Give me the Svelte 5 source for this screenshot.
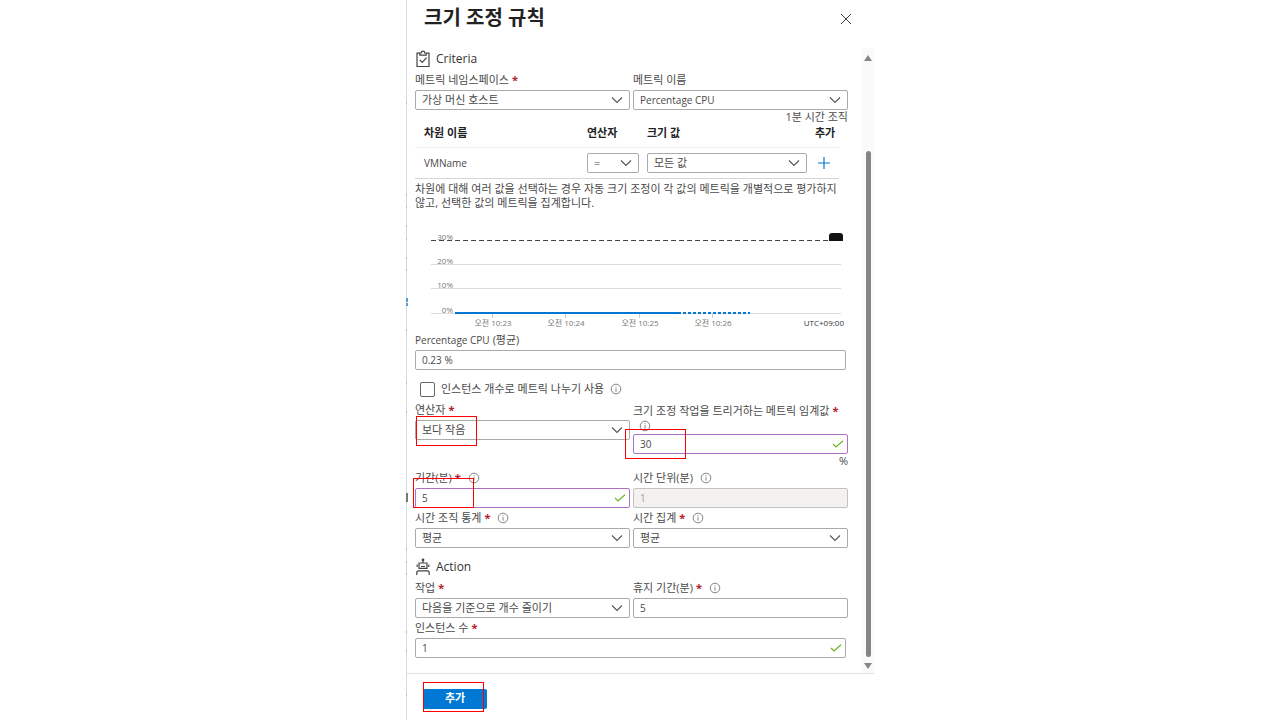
<script>
  const gridLines = [
    { label: '20%', y: 55 },
    { label: '10%', y: 79 },
    { label: '0%', y: 104 }
  ];
  const ticks = [
    { label: '오전 10:23', x: 78 },
    { label: '오전 10:24', x: 151 },
    { label: '오전 10:25', x: 225 },
    { label: '오전 10:26', x: 298 }
  ];
</script>

{#snippet chevron()}
  <svg class="glyph" width="12" height="8" viewBox="0 0 12 8" aria-hidden="true">
    <path d="M1 1.5 6 6.5 11 1.5" fill="none" stroke="#555" stroke-width="1.1" />
  </svg>
{/snippet}

{#snippet check()}
  <svg class="glyph" width="12" height="8" viewBox="0 0 12 8" aria-hidden="true">
    <path d="M1 4 4 7 11 .8" fill="none" stroke="#68b325" stroke-width="1.2" />
  </svg>
{/snippet}

{#snippet info()}
  <svg class="info" width="12" height="12" viewBox="0 0 12 12" aria-hidden="true">
    <circle cx="6" cy="6" r="4.8" fill="none" stroke="#777" stroke-width=".9" />
    <path d="M6 5.2V8.7M6 3.2V4.2" stroke="#777" stroke-width=".9" />
  </svg>
{/snippet}

{#snippet star()}<span class="star">*</span>{/snippet}

<main class="panel">
  <svg class="edge" width="2" height="720" viewBox="0 0 2 720" aria-hidden="true">
    <path d="M0 103h1M0 195h1M0 207h1M0 226h1M0 239h1M0 258h1M0 270h1M0 330h1M0 383h1M0 412h1M0 549h1M0 562h1M0 574h1M0 632h1M0 651h1M0 695h1" stroke="#999" />
    <path d="M1 298v4M1 303v3" stroke="#5b9bd0" stroke-width="2" />
    <path d="M1 493v9" stroke="#777" stroke-width="2" />
  </svg>

  <header>
    <h1>크기 조정 규칙</h1>
    <button class="close" aria-label="닫기">
      <svg width="12" height="12" viewBox="0 0 12 12"><path d="M1 1 11 11M11 1 1 11" stroke="#444" stroke-width="1" /></svg>
    </button>
  </header>

  <div class="scroller">
    <form class="content" id="rule">
      <h2>
        <svg width="16" height="18" viewBox="0 0 16 18" fill="none" stroke="#444" stroke-width="1.2" aria-hidden="true">
          <path d="M4.5 3.2H2V16.5H14V3.2H11.5" />
          <path d="M4.8 5.2V3H6.2C6.3 .6 9.7 .6 9.8 3H11.2V5.2Z" />
          <path d="M4.7 9.8 7.2 12.4 11.6 7.6" />
        </svg>
        Criteria
      </h2>

      <div class="pair">
        <div>
          <label for="ns">메트릭 네임스페이스 {@render star()}</label>
          <div class="field"><select id="ns"><option>가상 머신 호스트</option></select>{@render chevron()}</div>
        </div>
        <div>
          <label for="metric">메트릭 이름</label>
          <div class="field"><select id="metric" class="latin"><option>Percentage CPU</option></select>{@render chevron()}</div>
        </div>
      </div>
      <p class="note">1분 시간 조직</p>

      <table>
        <thead>
          <tr><th class="name">차원 이름</th><th class="op">연산자</th><th class="value">크기 값</th><th class="add">추가</th></tr>
        </thead>
        <tbody>
          <tr>
            <td class="name latin">VMName</td>
            <td class="op"><div class="field"><select aria-label="연산자"><option>=</option></select>{@render chevron()}</div></td>
            <td class="value"><div class="field"><select aria-label="크기 값"><option>모든 값</option></select>{@render chevron()}</div></td>
            <td class="add">
              <button type="button" class="plus" aria-label="추가">
                <svg width="12" height="12" viewBox="0 0 12 12"><path d="M6 0V12M0 6H12" stroke="#0078d4" stroke-width="1.2" /></svg>
              </button>
            </td>
          </tr>
        </tbody>
      </table>

      <p class="help">차원에 대해 여러 값을 선택하는 경우 자동 크기 조정이 각 값의 메트릭을 개별적으로 평가하지 않고, 선택한 값의 메트릭을 집계합니다.</p>

      <svg class="chart" viewBox="0 0 433 120" role="img" aria-label="Percentage CPU">
        {#each gridLines as g}
          <path d="M16 {g.y - 0.5}H426" stroke="#dcdcdc" />
          <text x="38" y={g.y - 1} text-anchor="end">{g.label}</text>
        {/each}
        <text x="38" y="30" text-anchor="end">30%</text>
        <path d="M16 30.5H428" stroke="#444" stroke-dasharray="5 3" />
        <path d="M414 31V26Q414 23 417 23H425Q428 23 428 26V31Z" fill="#111" />
        {#each ticks as t}
          <path d="M{t.x - 0.5} 104V108" stroke="#ccc" />
          <text x={t.x} y="116" text-anchor="middle">{t.label}</text>
        {/each}
        <path d="M40 103H263" stroke="#0078d4" stroke-width="2" />
        <path d="M263 103H335" stroke="#0078d4" stroke-width="2" stroke-dasharray="3 2" />
        <text class="zone" x="429" y="116" text-anchor="end">UTC+09:00</text>
      </svg>

      <div class="single">
        <label for="cpu"><span class="latin">Percentage CPU</span> (평균)</label>
        <div class="field"><input id="cpu" class="latin" value="0.23 %" /></div>
      </div>

      <div class="tick">
        <input type="checkbox" id="divide" />
        <label for="divide">인스턴스 개수로 메트릭 나누기 사용</label>
        {@render info()}
      </div>

      <div class="pair">
        <div>
          <label for="operator">연산자 {@render star()}</label>
          <div class="field">
            <select id="operator"><option>보다 작음</option></select>{@render chevron()}
            <span class="mark mark-operator"></span>
          </div>
        </div>
        <div>
          <label class="tall" for="threshold">크기 조정 작업을 트리거하는 메트릭 임계값 {@render star()}<span class="below">{@render info()}</span></label>
          <div class="field">
            <input id="threshold" class="latin edited" value="30" />{@render check()}
            <span class="mark mark-threshold"></span>
          </div>
        </div>
      </div>
      <p class="note">%</p>

      <div class="pair">
        <div>
          <label for="duration">기간(분) {@render star()} {@render info()}</label>
          <div class="field">
            <input id="duration" class="latin edited" value="5" />{@render check()}
            <span class="mark mark-duration"></span>
          </div>
        </div>
        <div>
          <label for="grain">시간 단위(분) {@render info()}</label>
          <div class="field"><input id="grain" class="latin" value="1" disabled /></div>
        </div>
        <div>
          <label for="stat">시간 조직 통계 {@render star()} {@render info()}</label>
          <div class="field"><select id="stat"><option>평균</option></select>{@render chevron()}</div>
        </div>
        <div>
          <label for="aggregation">시간 집계 {@render star()} {@render info()}</label>
          <div class="field"><select id="aggregation"><option>평균</option></select>{@render chevron()}</div>
        </div>
      </div>

      <h2 class="action">
        <svg width="16" height="18" viewBox="0 0 16 18" fill="none" stroke="#444" stroke-width="1.2" aria-hidden="true">
          <circle cx="8" cy="2" r=".8" fill="#444" />
          <path d="M8 3V5M4 5H12V10.4H4ZM2.2 6.4V9M13.8 6.4V9M6 8.5H10" />
          <path d="M1.8 17V14.5Q1.8 12.8 3.8 12.8H12.2Q14.2 12.8 14.2 14.5V17" />
        </svg>
        Action
      </h2>

      <div class="pair">
        <div>
          <label for="job">작업 {@render star()}</label>
          <div class="field"><select id="job"><option>다음을 기준으로 개수 줄이기</option></select>{@render chevron()}</div>
        </div>
        <div>
          <label for="cool">휴지 기간(분) {@render star()} {@render info()}</label>
          <div class="field"><input id="cool" class="latin" value="5" /></div>
        </div>
      </div>
      <div class="single">
        <label for="count">인스턴스 수 {@render star()}</label>
        <div class="field"><input id="count" class="latin" value="1" />{@render check()}</div>
      </div>
    </form>

    <div class="bar" aria-hidden="true">
      <svg width="8" height="14" viewBox="0 0 8 14"><path d="M4 4 8 10H0Z" fill="#858585" /></svg>
      <span class="space"></span>
      <span class="thumb"></span>
      <svg width="8" height="14" viewBox="0 0 8 14"><path d="M0 4H8L4 10Z" fill="#858585" /></svg>
    </div>
  </div>

  <footer>
    <div class="submit">
      <button form="rule">추가</button>
      <span class="mark mark-submit"></span>
    </div>
  </footer>
</main>

<style>
  :global(body) {
    margin: 0;
    background: #fff;
  }
  .panel,
  .panel * {
    box-sizing: border-box;
  }
  .panel {
    position: relative;
    display: flex;
    flex-direction: column;
    width: 100%;
    max-width: 468px;
    min-height: 100vh;
    margin: 0 auto;
    border-left: 1px solid #ddd;
    color: #4a4a4a;
    font: 11px/14px "Open Sans", "Noto Sans CJK KR", sans-serif;
  }
  .panel .latin {
    font-size: 10px;
  }
  .edge {
    position: absolute;
    left: -1px;
    top: 0;
  }
  header {
    display: flex;
    align-items: flex-start;
    justify-content: space-between;
    height: 48px;
    padding: 4px 20px 0 17px;
  }
  h1 {
    margin: 0;
    color: #222;
    font-size: 20px;
    line-height: 28px;
    font-weight: 600;
  }
  button {
    border: 0;
    padding: 0;
    background: none;
    font: inherit;
  }
  .close {
    display: grid;
    place-items: center;
    width: 16px;
    height: 30px;
  }
  .scroller {
    display: flex;
    flex: 1;
  }
  .content {
    flex: 1;
    min-width: 0;
    padding: 0 14px 15px 8px;
  }
  h2 {
    display: flex;
    align-items: center;
    gap: 5px;
    height: 22px;
    margin: 0;
    color: #333;
    font-size: 12px;
    font-weight: 400;
    line-height: 22px;
  }
  .action {
    margin-top: 8px;
  }
  .pair {
    display: grid;
    grid-template-columns: 1fr 1fr;
    column-gap: 3px;
    align-items: start;
  }
  label {
    display: flex;
    align-items: center;
    gap: 3px;
    height: 20px;
    white-space: nowrap;
  }
  .tall {
    flex-wrap: wrap;
    align-content: flex-start;
    row-gap: 0;
    height: 34px;
    padding-top: 4px;
  }
  .below {
    display: flex;
    align-items: center;
    width: 100%;
    height: 16px;
    padding-left: 6px;
  }
  .star {
    color: #b3202a;
    font-weight: 700;
  }
  .info {
    flex: none;
    margin-left: 4px;
  }
  .below .info {
    margin-left: 0;
  }
  .field {
    position: relative;
    display: grid;
    align-items: center;
  }
  .field > select,
  .field > input,
  .glyph {
    grid-area: 1 / 1;
  }
  .glyph {
    justify-self: end;
    margin-right: 7px;
    pointer-events: none;
  }
  .field > input + .glyph {
    margin-right: 4px;
  }
  select,
  .field > input {
    appearance: none;
    width: 100%;
    min-width: 0;
    height: 20px;
    margin: 0;
    padding: 0 6px 1px;
    border: 1px solid #aaa;
    border-radius: 2px;
    background: #fff;
    color: #4a4a4a;
    font: inherit;
  }
  .field > input.edited {
    border-color: #b070c4;
  }
  .field > input:disabled {
    border-color: #c4c2c0;
    background: #f3f2f1;
    color: #a19f9d;
  }
  .note,
  .help {
    margin: 0;
  }
  .note {
    text-align: right;
  }
  .help {
    margin-top: 3px;
    word-break: keep-all;
  }
  table {
    width: calc(100% - 9px);
    table-layout: fixed;
    border-collapse: separate;
    border-spacing: 0;
  }
  th,
  td {
    padding: 0;
    text-align: left;
    white-space: nowrap;
  }
  th {
    height: 24px;
    padding-bottom: 5px;
    border-bottom: 1px solid #eee;
    color: #222;
    font-weight: 700;
  }
  td {
    height: 31px;
    border-bottom: 1px solid #d6d6d6;
  }
  .name {
    padding-left: 9px;
  }
  .op {
    width: 60px;
    padding-right: 8px;
  }
  .value {
    width: 168px;
    padding-right: 8px;
  }
  .add {
    width: 24px;
  }
  .plus {
    display: grid;
    place-items: center;
    width: 18px;
    height: 20px;
  }
  .chart {
    display: block;
    width: 100%;
  }
  .chart text {
    fill: #777;
    font-size: 8px;
  }
  .chart .zone {
    fill: #333;
  }
  .single {
    padding-right: 2px;
  }
  .tick {
    display: flex;
    align-items: center;
    gap: 6px;
    height: 22px;
    margin-top: 8px;
    padding-left: 5px;
  }
  .tick input {
    appearance: none;
    width: 15px;
    height: 15px;
    margin: 0;
    border: 1px solid #666;
    border-radius: 2px;
    background: #fff;
  }
  .tick .info {
    margin-left: 0;
  }
  .mark {
    position: absolute;
    z-index: 1;
    width: 61px;
    height: 30px;
    border: 1px solid #ff0000;
    pointer-events: none;
  }
  .mark-operator {
    left: 1px;
    top: -4px;
  }
  .mark-threshold {
    left: -8px;
    top: -5px;
  }
  .mark-duration {
    left: -2px;
    top: -10px;
  }
  .mark-submit {
    left: 0;
    top: -7px;
  }
  .bar {
    display: flex;
    flex-direction: column;
    align-items: center;
    width: 12px;
    padding-top: 3px;
    background: #fafafa;
  }
  .space {
    flex: 17;
  }
  .thumb {
    flex: 100;
    width: 5px;
    margin-bottom: 2px;
    border-radius: 3px;
    background: #858585;
  }
  footer {
    padding: 15px 16px 11px;
    border-top: 1px solid #e1e1e1;
  }
  .submit {
    position: relative;
    width: 64px;
  }
  .submit button {
    display: block;
    width: 100%;
    height: 20px;
    padding-bottom: 2px;
    border-radius: 2px;
    background: #0078d4;
    color: #fff;
    font-weight: 700;
    line-height: 16px;
  }
</style>
